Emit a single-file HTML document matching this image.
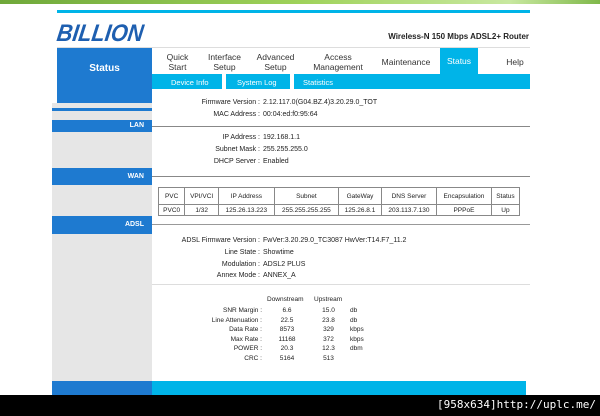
<!DOCTYPE html>
<html><head><style>
*{margin:0;padding:0;box-sizing:border-box}
body{width:600px;height:416px;background:#fff;position:relative;overflow:hidden;font-family:"Liberation Sans",Arial,sans-serif;font-size:7px;color:#222}
.a{position:absolute}
.topbar{left:0;top:0;width:600px;height:4px;background:linear-gradient(90deg,#6fa83a,#9fd25a 50%,#c8e8a0 85%,#7fb84a)}
.cyan{background:#00b4e8}
.blue{background:#1e7ad0}
.nav{color:#333;font-size:8.5px;text-align:center;line-height:10px}
.sub{color:#fff;font-size:7.5px}
.hdr{color:#fff;font-weight:bold;font-size:7px;text-align:right;padding-right:8px}
.r{text-align:right}
table{border-collapse:collapse}
td{border:1px solid #888;font-size:6.5px;text-align:center;height:11px;padding:0 2px}
</style></head><body>
<div class="a topbar"></div>
<div class="a cyan" style="left:57px;top:10px;width:473px;height:3px"></div>
<div class="a" style="left:57px;top:20px;font:italic 900 24px 'Liberation Sans',sans-serif;color:#1e5fb0;letter-spacing:0;transform:skewX(-8deg) scaleX(0.9);transform-origin:left">BILLION</div>
<div class="a" style="left:57px;top:47px;width:473px;height:1px;background:#ddd"></div>
<div class="a" style="right:71px;top:32px;font-weight:bold;font-size:8px;color:#222">Wireless-N 150 Mbps ADSL2+ Router</div>
<div class="a blue" style="left:57px;top:48px;width:95px;height:55px;color:#fff;font-weight:bold;font-size:10px;text-align:center;line-height:42px">Status</div>
<div class="a" style="left:152px;top:48px;width:378px;height:26px;background:#fff"></div>
<div class="a nav" style="left:160px;top:52px;width:35px">Quick<br>Start</div>
<div class="a nav" style="left:202px;top:52px;width:45px">Interface<br>Setup</div>
<div class="a nav" style="left:253px;top:52px;width:45px">Advanced<br>Setup</div>
<div class="a nav" style="left:307px;top:52px;width:62px">Access<br>Management</div>
<div class="a nav" style="left:378px;top:57px;width:56px">Maintenance</div>
<div class="a cyan nav" style="left:440px;top:48px;width:38px;height:26px;color:#fff;line-height:26px">Status</div>
<div class="a nav" style="left:500px;top:57px;width:30px">Help</div>
<div class="a cyan" style="left:152px;top:74px;width:378px;height:15px"></div>
<div class="a sub" style="left:171px;top:78px">Device Info</div>
<div class="a" style="left:222px;top:74px;width:4px;height:15px;background:#fff"></div>
<div class="a sub" style="left:237px;top:78px">System Log</div>
<div class="a" style="left:290px;top:74px;width:4px;height:15px;background:#fff"></div>
<div class="a sub" style="left:303px;top:78px">Statistics</div>
<div class="a" style="left:52px;top:103px;width:100px;height:278px;background:#e6e6e6"></div>
<div class="a blue" style="left:52px;top:108px;width:100px;height:3px"></div>
<div class="a blue hdr" style="left:52px;top:120px;width:100px;height:12px;line-height:12px">LAN</div>
<div class="a blue hdr" style="left:52px;top:168px;width:100px;height:17px;line-height:17px">WAN</div>
<div class="a blue hdr" style="left:52px;top:216px;width:100px;height:18px;line-height:18px">ADSL</div>
<div class="a" style="left:152px;top:126px;width:378px;height:1px;background:#888"></div>
<div class="a" style="left:152px;top:176px;width:378px;height:1px;background:#888"></div>
<div class="a" style="left:152px;top:224px;width:378px;height:1px;background:#999"></div>
<div class="a" style="left:152px;top:284px;width:378px;height:1px;background:#ddd"></div>
<div class="a r" style="left:160px;top:99px;width:100px">Firmware Version :</div>
<div class="a" style="left:263px;top:99px">2.12.117.0(G04.BZ.4)3.20.29.0_TOT</div>
<div class="a r" style="left:160px;top:111px;width:100px">MAC Address :</div>
<div class="a" style="left:263px;top:111px">00:04:ed:f0:95:64</div>
<div class="a r" style="left:160px;top:134px;width:100px">IP Address :</div>
<div class="a" style="left:263px;top:134px">192.168.1.1</div>
<div class="a r" style="left:160px;top:146px;width:100px">Subnet Mask :</div>
<div class="a" style="left:263px;top:146px">255.255.255.0</div>
<div class="a r" style="left:160px;top:158px;width:100px">DHCP Server :</div>
<div class="a" style="left:263px;top:158px">Enabled</div>
<table class="a" style="left:158px;top:187px;width:362px">
<tr style="height:17px"><td>PVC</td><td>VPI/VCI</td><td>IP Address</td><td>Subnet</td><td>GateWay</td><td>DNS Server</td><td>Encapsulation</td><td>Status</td></tr>
<tr><td>PVC0</td><td>1/32</td><td>125.26.13.223</td><td>255.255.255.255</td><td>125.26.8.1</td><td>203.113.7.130</td><td>PPPoE</td><td>Up</td></tr>
</table>
<div class="a r" style="left:160px;top:237px;width:100px">ADSL Firmware Version :</div>
<div class="a" style="left:263px;top:237px">FwVer:3.20.29.0_TC3087 HwVer:T14.F7_11.2</div>
<div class="a r" style="left:160px;top:249px;width:100px">Line State :</div>
<div class="a" style="left:263px;top:249px">Showtime</div>
<div class="a r" style="left:160px;top:261px;width:100px">Modulation :</div>
<div class="a" style="left:263px;top:261px">ADSL2 PLUS</div>
<div class="a r" style="left:160px;top:272px;width:100px">Annex Mode :</div>
<div class="a" style="left:263px;top:272px">ANNEX_A</div>
<div class="a" style="left:267px;top:296px;font-size:6.5px">Downstream</div>
<div class="a" style="left:314px;top:296px;font-size:6.5px">Upstream</div>
<div class="a r" style="left:160px;top:306px;width:102px;font-size:6.5px;line-height:9.5px">SNR Margin :<br>Line Attenuation :<br>Data Rate :<br>Max Rate :<br>POWER :<br>CRC :</div>
<div class="a" style="left:272px;top:306px;width:30px;text-align:center;font-size:6.5px;line-height:9.5px">6.6<br>22.5<br>8573<br>11168<br>20.3<br>5164</div>
<div class="a" style="left:316px;top:306px;width:25px;text-align:center;font-size:6.5px;line-height:9.5px">15.0<br>23.8<br>329<br>372<br>12.3<br>513</div>
<div class="a" style="left:350px;top:306px;font-size:6.5px;line-height:9.5px">db<br>db<br>kbps<br>kbps<br>dbm</div>
<div class="a blue" style="left:52px;top:381px;width:100px;height:14px"></div>
<div class="a cyan" style="left:152px;top:381px;width:374px;height:14px"></div>
<div class="a" style="left:0;top:395px;width:600px;height:21px;background:#000"></div>
<div class="a" style="right:4px;top:398px;color:#fff;font-size:11px;font-family:'DejaVu Sans Mono',monospace">[958x634]http://uplc.me/</div>
</body></html>
